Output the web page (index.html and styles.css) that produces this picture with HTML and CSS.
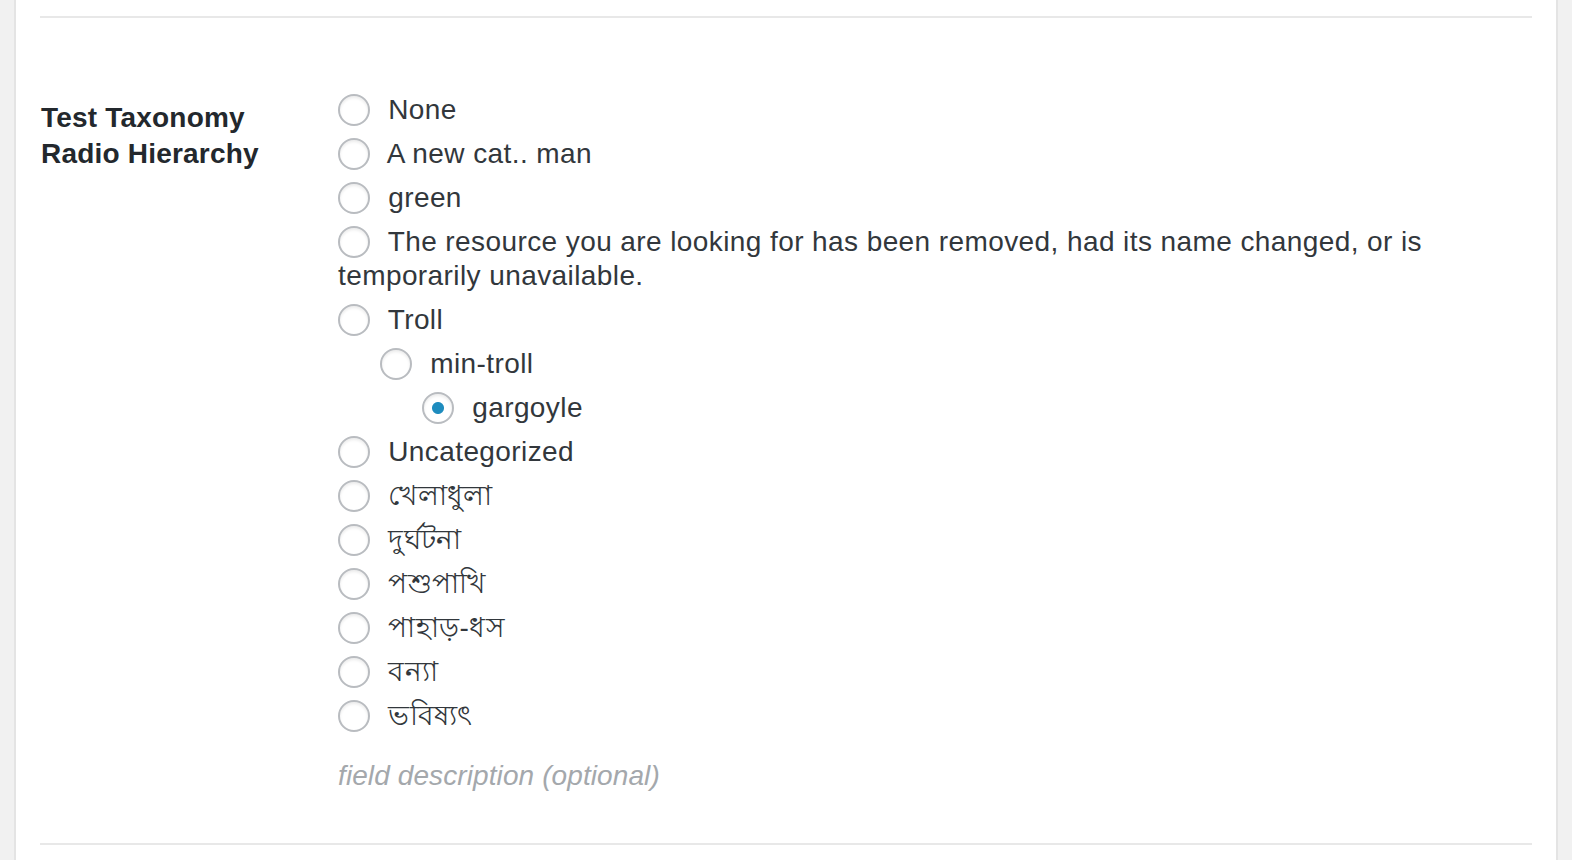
FILE: index.html
```html
<!DOCTYPE html>
<html lang="en">
<head>
<meta charset="utf-8">
<title>Test Taxonomy Radio Hierarchy</title>
<link rel="stylesheet" href="styles.css">
</head>
<body>
<div class="panel">
  <div class="field-row">
    <div class="field-label">Test Taxonomy<br>Radio Hierarchy</div>
    <div class="field-body">
      <ul class="radio-list">
        <li><label><input type="radio" name="tax"> None</label></li>
        <li><label><input type="radio" name="tax"> A new cat.. man</label></li>
        <li><label><input type="radio" name="tax"> green</label></li>
        <li><label><input type="radio" name="tax"> The resource you are looking for has been removed, had its name changed, or is temporarily unavailable.</label></li>
        <li><label><input type="radio" name="tax"> Troll</label>
          <ul class="radio-list children">
            <li><label><input type="radio" name="tax"> min-troll</label>
              <ul class="radio-list children">
                <li><label><input type="radio" name="tax" checked> gargoyle</label></li>
              </ul>
            </li>
          </ul>
        </li>
        <li><label><input type="radio" name="tax"> Uncategorized</label></li>
        <li><label><input type="radio" name="tax"> খেলাধুলা</label></li>
        <li><label><input type="radio" name="tax"> দুর্ঘটনা</label></li>
        <li><label><input type="radio" name="tax"> পশুপাখি</label></li>
        <li><label><input type="radio" name="tax"> পাহাড়-ধস</label></li>
        <li><label><input type="radio" name="tax"> বন্যা</label></li>
        <li><label><input type="radio" name="tax"> ভবিষ্যৎ</label></li>
      </ul>
      <p class="description">field description (optional)</p>
    </div>
  </div>
</div>
</body>
</html>
```

FILE: styles.css
```css
html, body {
  margin: 0;
  padding: 0;
  background: #f1f1f1;
  height: 100%;
}

body {
  font-family: "Liberation Sans", Arial, sans-serif;
  color: #32373c;
}

.panel {
  margin: 0 14px;
  min-height: 100%;
  box-sizing: border-box;
  background: #fff;
  border-left: 2px solid #e4e4e4;
  border-right: 2px solid #e4e4e4;
  padding: 16px 24px 0;
}

.field-row {
  display: grid;
  grid-template-columns: 297px 1fr;
  border-top: 2px solid #e8e8e8;
  border-bottom: 2px solid #e8e8e8;
  padding: 75px 0 50px;
}

.field-label {
  font-weight: bold;
  font-size: 28px;
  line-height: 36px;
  letter-spacing: 0.2px;
  color: #23282d;
  padding-top: 7px;
  padding-left: 1px;
}

.field-body {
  padding-left: 1px;
}

.radio-list {
  list-style: none;
  margin: 0;
  padding: 0;
}

.radio-list li {
  font-size: 28px;
  line-height: 34px;
  letter-spacing: 0.41px;
  margin: 0;
}

.radio-list li > label {
  display: block;
  margin-bottom: 10px;
}

.radio-list.children {
  margin-left: 42px;
}

.radio-list input[type="radio"] {
  -webkit-appearance: none;
  appearance: none;
  width: 32px;
  height: 32px;
  box-sizing: border-box;
  border: 2px solid #b9bcc0;
  border-radius: 50%;
  background: #fff;
  box-shadow: inset 0 2px 3px rgba(0, 0, 0, 0.08);
  margin: 0 10px 0 0;
  vertical-align: -7px;
}

.radio-list input[type="radio"]:checked {
  background: radial-gradient(circle at center, #1e8cbe 0, #1e8cbe 5.5px, #fff 6.5px);
}

.description {
  margin: 26px 0 0;
  font-size: 28px;
  line-height: 34px;
  letter-spacing: 0.1px;
  font-style: italic;
  color: #a4a8ac;
}
```
